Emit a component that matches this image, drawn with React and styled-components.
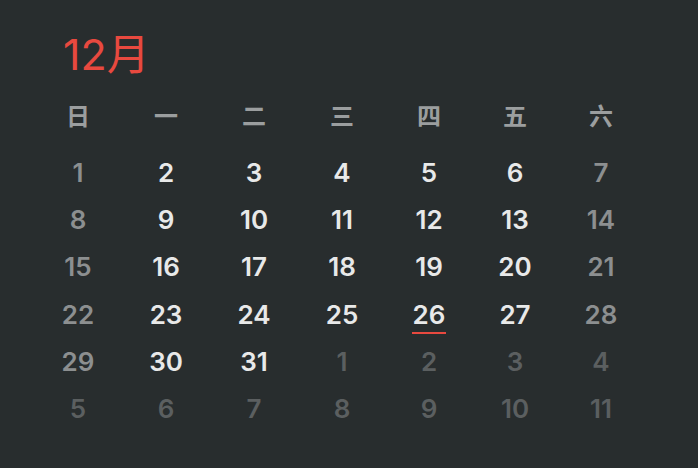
import React from 'react';
import styled, { createGlobalStyle } from 'styled-components';

const GlobalStyle = createGlobalStyle`
  html, body {
    margin: 0;
    padding: 0;
    background: #282d2e;
  }
  body {
    font-family: Inter, "Noto Sans CJK SC", sans-serif;
  }
`;

const WEEKDAYS = ['日', '一', '二', '三', '四', '五', '六'];
const TODAY = 26;

// December starting on a Sunday, 31 days, padded with next month
const buildDays = () => {
  const days = [];
  for (let d = 1; d <= 31; d++) days.push({ n: d, inMonth: true });
  let next = 1;
  while (days.length < 42) days.push({ n: next++, inMonth: false });
  return days;
};

const App = () => {
  const days = buildDays();

  return (
    <Page>
      <GlobalStyle />
      <Title>12月</Title>
      <Grid>
        {WEEKDAYS.map((w) => (
          <Weekday key={w}>{w}</Weekday>
        ))}
        {days.map((d, idx) => {
          const col = idx % 7;
          const kind = !d.inMonth ? 'other' : col === 0 || col === 6 ? 'weekend' : 'normal';
          return (
            <Day key={idx} $kind={kind}>
              <span className={d.inMonth && d.n === TODAY ? 'today' : ''}>{d.n}</span>
            </Day>
          );
        })}
      </Grid>
    </Page>
  );
};

export default App;

const Page = styled.div`
  width: 698px;
  height: 468px;
  box-sizing: border-box;
  padding: 26px 0 0 34px;
  overflow: hidden;
`;

const Title = styled.div`
  margin-left: 29px;
  font-size: 43px;
  font-weight: 400;
  line-height: 56px;
  color: #e8493f;
  font-family: Inter, "Noto Sans CJK SC", sans-serif;
`;

const Grid = styled.div`
  display: grid;
  grid-template-columns: repeat(4, 88px) repeat(3, 86px);
  grid-template-rows: 67px;
  grid-auto-rows: 47.2px;
`;

const Weekday = styled.div`
  display: flex;
  align-items: center;
  justify-content: center;
  font-size: 24px;
  font-weight: 700;
  color: #9b9e9f;
  padding-bottom: 3px;
  box-sizing: border-box;
  font-family: "Noto Sans CJK SC", sans-serif;
`;

const colors = {
  normal: '#e8e9e9',
  weekend: '#8c8f90',
  other: '#5b5f60',
};

const Day = styled.div`
  display: flex;
  align-items: center;
  justify-content: center;
  font-size: 26px;
  font-weight: 600;
  color: ${(p) => colors[p.$kind]};

  span {
    position: relative;
  }

  .today::after {
    content: '';
    position: absolute;
    left: -1px;
    right: -1px;
    bottom: -4px;
    height: 2px;
    background: #e8493f;
  }
`;
